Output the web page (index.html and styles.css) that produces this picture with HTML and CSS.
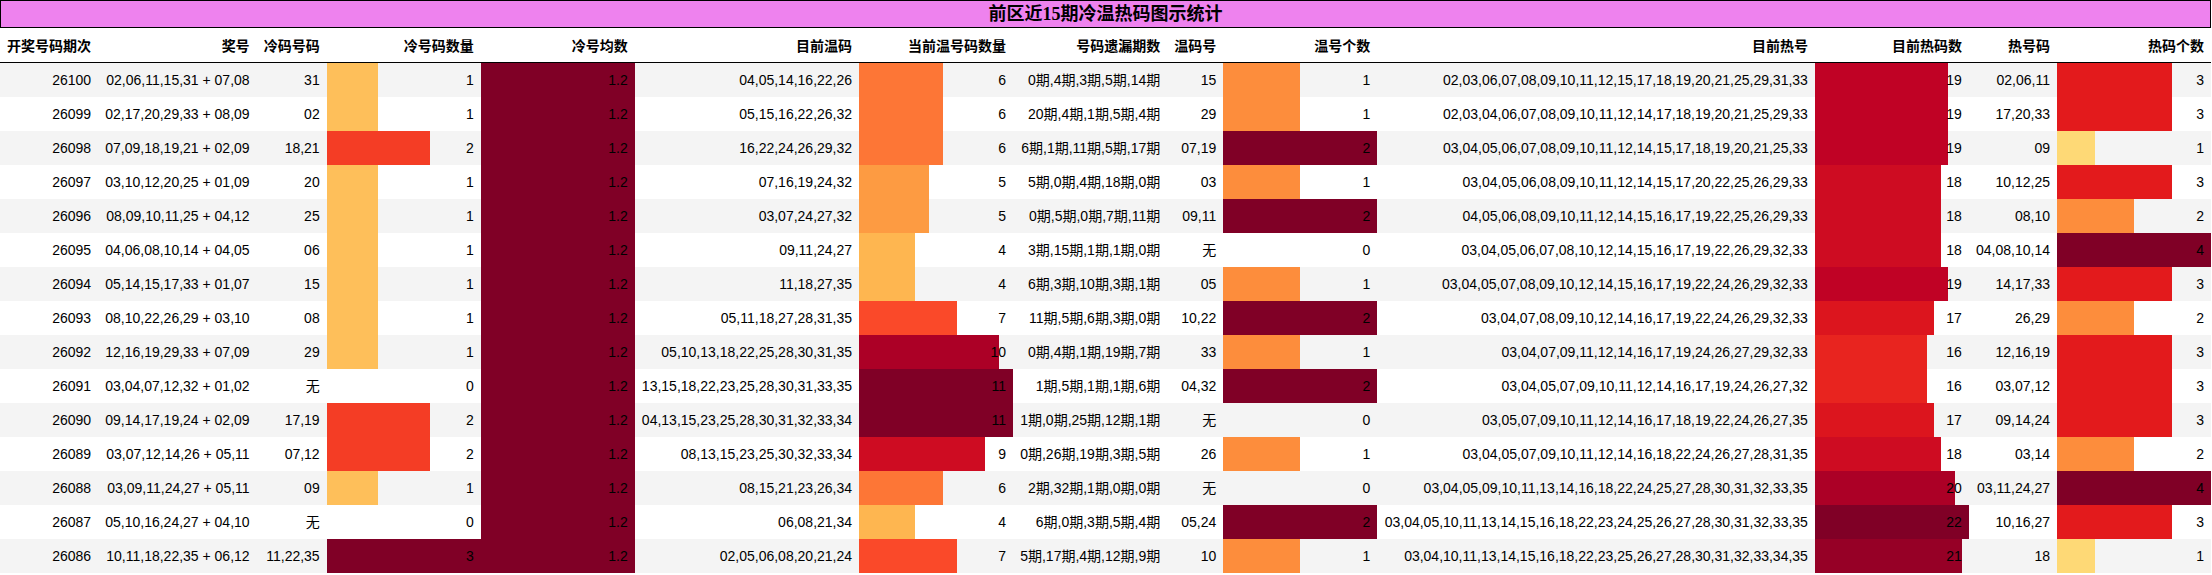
FILE: index.html
```html
<!DOCTYPE html>
<html lang="zh">
<head>
<meta charset="utf-8">
<title>前区近15期冷温热码图示统计</title>
<link rel="stylesheet" href="styles.css">
</head>
<body>
<table class="stats">
<caption class="title">前区近15期冷温热码图示统计</caption>
<thead>
<tr>
<th>开奖号码期次</th><th>奖号</th><th>冷码号码</th><th class="barcol">冷号码数量</th><th class="barcol">冷号均数</th><th>目前温码</th><th class="barcol">当前温号码数量</th><th>号码遗漏期数</th><th>温码号</th><th class="barcol">温号个数</th><th>目前热号</th><th class="barcol">目前热码数</th><th>热号码</th><th class="barcol">热码个数</th>
</tr>
</thead>
<tbody>
<tr><td>26100</td><td>02,06,11,15,31 + 07,08</td><td>31</td><td class="bar" style="--w:33.33%;--c:#febf5a">1</td><td class="bar" style="--w:100%;--c:#800026">1.2</td><td>04,05,14,16,22,26</td><td class="bar" style="--w:54.55%;--c:#fd7636">6</td><td>0期,4期,3期,5期,14期</td><td>15</td><td class="bar" style="--w:50%;--c:#fd8d3c">1</td><td>02,03,06,07,08,09,10,11,12,15,17,18,19,20,21,25,29,31,33</td><td class="bar" style="--w:86.36%;--c:#c00225">19</td><td>02,06,11</td><td class="bar" style="--w:75%;--c:#e31a1c">3</td></tr>
<tr><td>26099</td><td>02,17,20,29,33 + 08,09</td><td>02</td><td class="bar" style="--w:33.33%;--c:#febf5a">1</td><td class="bar" style="--w:100%;--c:#800026">1.2</td><td>05,15,16,22,26,32</td><td class="bar" style="--w:54.55%;--c:#fd7636">6</td><td>20期,4期,1期,5期,4期</td><td>29</td><td class="bar" style="--w:50%;--c:#fd8d3c">1</td><td>02,03,04,06,07,08,09,10,11,12,14,17,18,19,20,21,25,29,33</td><td class="bar" style="--w:86.36%;--c:#c00225">19</td><td>17,20,33</td><td class="bar" style="--w:75%;--c:#e31a1c">3</td></tr>
<tr><td>26098</td><td>07,09,18,19,21 + 02,09</td><td>18,21</td><td class="bar" style="--w:66.67%;--c:#f43d25">2</td><td class="bar" style="--w:100%;--c:#800026">1.2</td><td>16,22,24,26,29,32</td><td class="bar" style="--w:54.55%;--c:#fd7636">6</td><td>6期,1期,11期,5期,17期</td><td>07,19</td><td class="bar" style="--w:100%;--c:#800026">2</td><td>03,04,05,06,07,08,09,10,11,12,14,15,17,18,19,20,21,25,33</td><td class="bar" style="--w:86.36%;--c:#c00225">19</td><td>09</td><td class="bar" style="--w:25%;--c:#fed976">1</td></tr>
<tr><td>26097</td><td>03,10,12,20,25 + 01,09</td><td>20</td><td class="bar" style="--w:33.33%;--c:#febf5a">1</td><td class="bar" style="--w:100%;--c:#800026">1.2</td><td>07,16,19,24,32</td><td class="bar" style="--w:45.45%;--c:#fd9b42">5</td><td>5期,0期,4期,18期,0期</td><td>03</td><td class="bar" style="--w:50%;--c:#fd8d3c">1</td><td>03,04,05,06,08,09,10,11,12,14,15,17,20,22,25,26,29,33</td><td class="bar" style="--w:81.82%;--c:#ce0c22">18</td><td>10,12,25</td><td class="bar" style="--w:75%;--c:#e31a1c">3</td></tr>
<tr><td>26096</td><td>08,09,10,11,25 + 04,12</td><td>25</td><td class="bar" style="--w:33.33%;--c:#febf5a">1</td><td class="bar" style="--w:100%;--c:#800026">1.2</td><td>03,07,24,27,32</td><td class="bar" style="--w:45.45%;--c:#fd9b42">5</td><td>0期,5期,0期,7期,11期</td><td>09,11</td><td class="bar" style="--w:100%;--c:#800026">2</td><td>04,05,06,08,09,10,11,12,14,15,16,17,19,22,25,26,29,33</td><td class="bar" style="--w:81.82%;--c:#ce0c22">18</td><td>08,10</td><td class="bar" style="--w:50%;--c:#fd8d3c">2</td></tr>
<tr><td>26095</td><td>04,06,08,10,14 + 04,05</td><td>06</td><td class="bar" style="--w:33.33%;--c:#febf5a">1</td><td class="bar" style="--w:100%;--c:#800026">1.2</td><td>09,11,24,27</td><td class="bar" style="--w:36.36%;--c:#feb650">4</td><td>3期,15期,1期,1期,0期</td><td>无</td><td class="bar">0</td><td>03,04,05,06,07,08,10,12,14,15,16,17,19,22,26,29,32,33</td><td class="bar" style="--w:81.82%;--c:#ce0c22">18</td><td>04,08,10,14</td><td class="bar" style="--w:100%;--c:#800026">4</td></tr>
<tr><td>26094</td><td>05,14,15,17,33 + 01,07</td><td>15</td><td class="bar" style="--w:33.33%;--c:#febf5a">1</td><td class="bar" style="--w:100%;--c:#800026">1.2</td><td>11,18,27,35</td><td class="bar" style="--w:36.36%;--c:#feb650">4</td><td>6期,3期,10期,3期,1期</td><td>05</td><td class="bar" style="--w:50%;--c:#fd8d3c">1</td><td>03,04,05,07,08,09,10,12,14,15,16,17,19,22,24,26,29,32,33</td><td class="bar" style="--w:86.36%;--c:#c00225">19</td><td>14,17,33</td><td class="bar" style="--w:75%;--c:#e31a1c">3</td></tr>
<tr><td>26093</td><td>08,10,22,26,29 + 03,10</td><td>08</td><td class="bar" style="--w:33.33%;--c:#febf5a">1</td><td class="bar" style="--w:100%;--c:#800026">1.2</td><td>05,11,18,27,28,31,35</td><td class="bar" style="--w:63.64%;--c:#fa4929">7</td><td>11期,5期,6期,3期,0期</td><td>10,22</td><td class="bar" style="--w:100%;--c:#800026">2</td><td>03,04,07,08,09,10,12,14,16,17,19,22,24,26,29,32,33</td><td class="bar" style="--w:77.27%;--c:#dc151e">17</td><td>26,29</td><td class="bar" style="--w:50%;--c:#fd8d3c">2</td></tr>
<tr><td>26092</td><td>12,16,19,29,33 + 07,09</td><td>29</td><td class="bar" style="--w:33.33%;--c:#febf5a">1</td><td class="bar" style="--w:100%;--c:#800026">1.2</td><td>05,10,13,18,22,25,28,30,31,35</td><td class="bar" style="--w:90.91%;--c:#ac0026">10</td><td>0期,4期,1期,19期,7期</td><td>33</td><td class="bar" style="--w:50%;--c:#fd8d3c">1</td><td>03,04,07,09,11,12,14,16,17,19,24,26,27,29,32,33</td><td class="bar" style="--w:72.73%;--c:#e8241f">16</td><td>12,16,19</td><td class="bar" style="--w:75%;--c:#e31a1c">3</td></tr>
<tr><td>26091</td><td>03,04,07,12,32 + 01,02</td><td>无</td><td class="bar">0</td><td class="bar" style="--w:100%;--c:#800026">1.2</td><td>13,15,18,22,23,25,28,30,31,33,35</td><td class="bar" style="--w:100%;--c:#800026">11</td><td>1期,5期,1期,1期,6期</td><td>04,32</td><td class="bar" style="--w:100%;--c:#800026">2</td><td>03,04,05,07,09,10,11,12,14,16,17,19,24,26,27,32</td><td class="bar" style="--w:72.73%;--c:#e8241f">16</td><td>03,07,12</td><td class="bar" style="--w:75%;--c:#e31a1c">3</td></tr>
<tr><td>26090</td><td>09,14,17,19,24 + 02,09</td><td>17,19</td><td class="bar" style="--w:66.67%;--c:#f43d25">2</td><td class="bar" style="--w:100%;--c:#800026">1.2</td><td>04,13,15,23,25,28,30,31,32,33,34</td><td class="bar" style="--w:100%;--c:#800026">11</td><td>1期,0期,25期,12期,1期</td><td>无</td><td class="bar">0</td><td>03,05,07,09,10,11,12,14,16,17,18,19,22,24,26,27,35</td><td class="bar" style="--w:77.27%;--c:#dc151e">17</td><td>09,14,24</td><td class="bar" style="--w:75%;--c:#e31a1c">3</td></tr>
<tr><td>26089</td><td>03,07,12,14,26 + 05,11</td><td>07,12</td><td class="bar" style="--w:66.67%;--c:#f43d25">2</td><td class="bar" style="--w:100%;--c:#800026">1.2</td><td>08,13,15,23,25,30,32,33,34</td><td class="bar" style="--w:81.82%;--c:#ce0c22">9</td><td>0期,26期,19期,3期,5期</td><td>26</td><td class="bar" style="--w:50%;--c:#fd8d3c">1</td><td>03,04,05,07,09,10,11,12,14,16,18,22,24,26,27,28,31,35</td><td class="bar" style="--w:81.82%;--c:#ce0c22">18</td><td>03,14</td><td class="bar" style="--w:50%;--c:#fd8d3c">2</td></tr>
<tr><td>26088</td><td>03,09,11,24,27 + 05,11</td><td>09</td><td class="bar" style="--w:33.33%;--c:#febf5a">1</td><td class="bar" style="--w:100%;--c:#800026">1.2</td><td>08,15,21,23,26,34</td><td class="bar" style="--w:54.55%;--c:#fd7636">6</td><td>2期,32期,1期,0期,0期</td><td>无</td><td class="bar">0</td><td>03,04,05,09,10,11,13,14,16,18,22,24,25,27,28,30,31,32,33,35</td><td class="bar" style="--w:90.91%;--c:#ac0026">20</td><td>03,11,24,27</td><td class="bar" style="--w:100%;--c:#800026">4</td></tr>
<tr><td>26087</td><td>05,10,16,24,27 + 04,10</td><td>无</td><td class="bar">0</td><td class="bar" style="--w:100%;--c:#800026">1.2</td><td>06,08,21,34</td><td class="bar" style="--w:36.36%;--c:#feb650">4</td><td>6期,0期,3期,5期,4期</td><td>05,24</td><td class="bar" style="--w:100%;--c:#800026">2</td><td>03,04,05,10,11,13,14,15,16,18,22,23,24,25,26,27,28,30,31,32,33,35</td><td class="bar" style="--w:100%;--c:#800026">22</td><td>10,16,27</td><td class="bar" style="--w:75%;--c:#e31a1c">3</td></tr>
<tr><td>26086</td><td>10,11,18,22,35 + 06,12</td><td>11,22,35</td><td class="bar" style="--w:100%;--c:#800026">3</td><td class="bar" style="--w:100%;--c:#800026">1.2</td><td>02,05,06,08,20,21,24</td><td class="bar" style="--w:63.64%;--c:#fa4929">7</td><td>5期,17期,4期,12期,9期</td><td>10</td><td class="bar" style="--w:50%;--c:#fd8d3c">1</td><td>03,04,10,11,13,14,15,16,18,22,23,25,26,27,28,30,31,32,33,34,35</td><td class="bar" style="--w:95.45%;--c:#960026">21</td><td>18</td><td class="bar" style="--w:25%;--c:#fed976">1</td></tr>
</tbody>
</table>
</body>
</html>
```
FILE: styles.css
```css
html, body {
  margin: 0;
  padding: 0;
  background: #ffffff;
}

.stats {
  width: 2211px;
  border-collapse: separate;
  border-spacing: 0;
  color: #000000;
  font-family: "Liberation Sans", "Noto Sans CJK SC", sans-serif;
  font-size: 14px;
}

.title {
  caption-side: top;
  height: 26px;
  line-height: 26px;
  border: 1px solid #000000;
  background: #ee82ee;
  font-family: "Liberation Serif", "Noto Sans CJK SC", serif;
  font-size: 18px;
  font-weight: bold;
  text-align: center;
  padding: 0;
}

.stats thead tr {
  height: 35px;
}

.stats th {
  padding: 2px 7px 0;
  text-align: right;
  vertical-align: middle;
  white-space: nowrap;
  font-weight: bold;
  line-height: 20px;
  border-bottom: 1px solid #000000;
}

.stats tbody tr {
  height: 34px;
}

.stats tbody tr:nth-child(odd) {
  background: #f4f4f4;
}

.stats td {
  padding: 0 7px;
  text-align: right;
  vertical-align: middle;
  white-space: nowrap;
  line-height: 20px;
}

.stats .barcol,
.stats .bar {
  width: 140px;
}

.stats .bar {
  --w: 0%;
  --c: transparent;
  background: linear-gradient(90deg, var(--c) var(--w), transparent var(--w));
}
```
